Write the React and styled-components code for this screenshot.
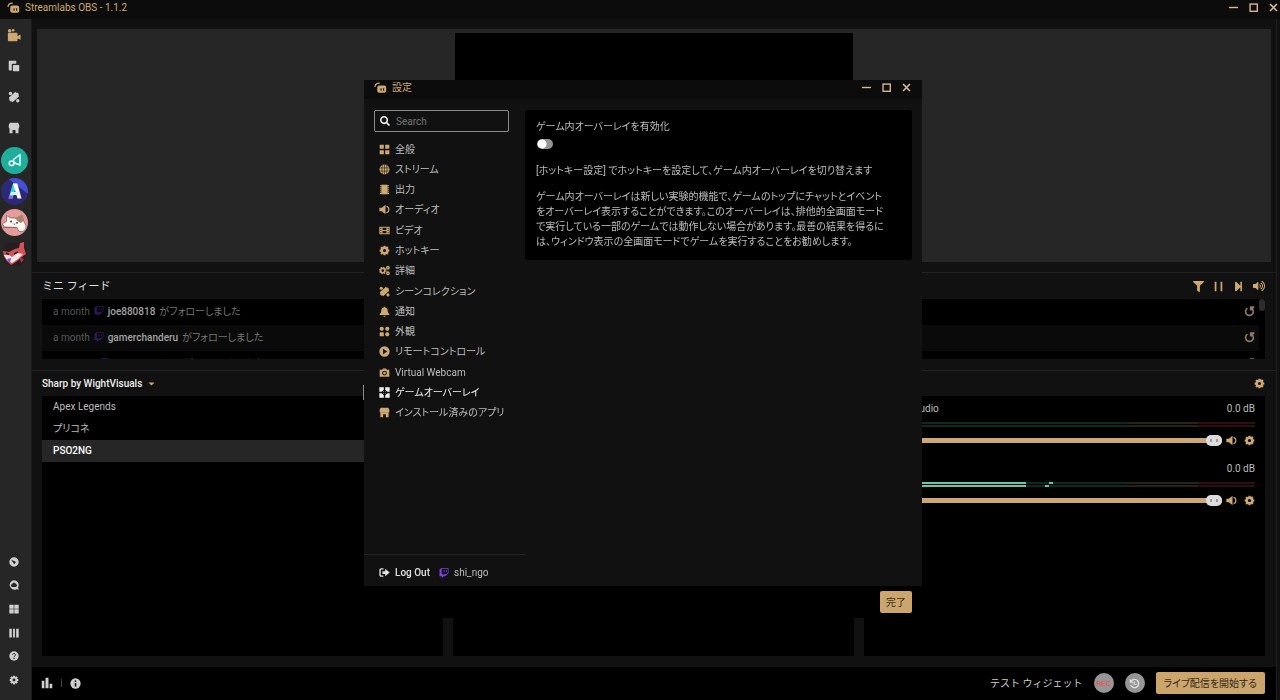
import { useState } from "react";
import styled, { createGlobalStyle } from "styled-components";
import { FaTwitch, FaSearch, FaFilter, FaStepForward, FaVolumeUp, FaCaretDown } from "react-icons/fa";

const GlobalStyle = createGlobalStyle`
  * {
    box-sizing: border-box;
  }

  body {
    margin: 0;
    background-color: #111111;
    color: #bdbdbd;
    font-family: Roboto, "Noto Sans CJK JP", sans-serif;
    font-size: 10px;
    line-height: 15px;
    font-feature-settings: "palt";
  }

  button,
  input {
    font: inherit;
    font-feature-settings: inherit;
    color: inherit;
  }

  button {
    border: 0;
    padding: 0;
    background: none;
  }

  ul {
    list-style: none;
    margin: 0;
    padding: 0;
  }

  h2,
  p {
    margin: 0;
  }

  svg {
    display: block;
    flex-shrink: 0;
  }
`;

const gold = "#cda872";

/* ---------- icons ---------- */

const Svg = ({ size = 11, children, ...rest }) => (
  <svg width={size} height={size} viewBox="0 0 16 16" fill="currentColor" aria-hidden="true" {...rest}>
    {children}
  </svg>
);

const LogoIcon = (props) => (
  <Svg {...props}>
    <path
      fillRule="evenodd"
      d="M6.500 5.500h6a2.500 2.500 0 0 1 2.500 2.500v4a2.500 2.500 0 0 1-2.500 2.500h-6A2.500 2.500 0 0 1 4 12V8a2.500 2.500 0 0 1 2.500-2.500zM8 9v3h1.300V9zm3.200 0v3h1.300V9z"
    />
    <path d="M1.300 6.500C1.800 4 3.800 2.500 6.500 2.500" fill="none" stroke="currentColor" strokeWidth="1.600" strokeLinecap="round" />
  </Svg>
);

const EditorIcon = (props) => (
  <Svg {...props}>
    <circle cx="3" cy="3" r="2" />
    <circle cx="7" cy="2.500" r="1.500" />
    <path d="M1 5.500h10a1 1 0 0 1 1 1V9l3.500-1.500v6L12 12v2a1 1 0 0 1-1 1H2a1 1 0 0 1-1-1z" />
  </Svg>
);

const ThemesIcon = (props) => (
  <Svg {...props}>
    <path d="M1 1h10v4H6.500A1.500 1.500 0 0 0 5 6.500V14H2a1 1 0 0 1-1-1z" />
    <rect x="6.500" y="6.500" width="8.500" height="8.500" rx="1" />
  </Svg>
);

const ToolsIcon = (props) => (
  <Svg {...props}>
    <path d="M10 1l1.500 1.500 1-.5 2 2-.5 1.500L15 7l-9 8-1.500-1.500-1 .5-2-2 .5-1.500L1 9z" />
    <circle cx="3.300" cy="3.300" r="2.300" />
    <circle cx="13" cy="13" r="2.300" />
  </Svg>
);

const StoreIcon = (props) => (
  <Svg {...props}>
    <path d="M2.500 1h11l1.500 3v3a1.500 1.500 0 0 1-1.500 1.500h-11A1.500 1.500 0 0 1 1 7V4z" />
    <path fillRule="evenodd" d="M2 8h12v7H2zM6 10.500V15h4v-4.500z" />
  </Svg>
);

const DashboardIcon = (props) => (
  <Svg {...props}>
    <path fillRule="evenodd" d="M8 .5a7.500 7.500 0 1 1 0 15 7.500 7.500 0 0 1 0-15zM3.500 4.500l3.200 4.800a2 2 0 1 0 2.600-2.600z" />
  </Svg>
);

const CloudbotIcon = (props) => (
  <Svg {...props}>
    <path
      fillRule="evenodd"
      d="M8 .5a7.500 7.500 0 0 1 6.500 11.200L15.500 15l-3.500-.3A7.500 7.500 0 1 1 8 .5zM8 4a3 3 0 0 0-2.800 2.500A2.200 2.200 0 0 0 5.500 11h5a2.200 2.200 0 0 0 .3-4.500A3 3 0 0 0 8 4z"
    />
  </Svg>
);

const GridIcon = (props) => (
  <Svg {...props}>
    <path d="M.5 1h7v6.500h-7zM8.500 1h7v6.500h-7zM.5 8.500h7V15h-7zM8.500 8.500h7V15h-7z" />
  </Svg>
);

const ColumnsIcon = (props) => (
  <Svg {...props}>
    <path d="M.5 1h4v14h-4zM6.500 1h3v14h-3zM11.500 1h4v14h-4z" />
  </Svg>
);

const QuestionIcon = (props) => (
  <Svg {...props}>
    <circle cx="8" cy="8" r="7.500" />
    <path d="M5.700 6.200a2.300 2.300 0 1 1 3.500 2C8.300 8.700 8 9 8 10" fill="none" stroke="#262626" strokeWidth="1.600" />
    <circle cx="8" cy="12" r="1.100" fill="#262626" />
  </Svg>
);

const InfoIcon = (props) => (
  <Svg {...props}>
    <circle cx="8" cy="8" r="7.500" />
    <circle cx="8" cy="4.500" r="1.300" fill="#000000" />
    <path d="M8 7v5.500" stroke="#000000" strokeWidth="2.200" />
  </Svg>
);

const GearIcon = (props) => (
  <Svg {...props}>
    <path
      fillRule="evenodd"
      d="M6.600 1h2.800l.5 2 1.900-1.100 2.100 2.100L12.900 6l2.100.6v2.800l-2.100.5 1.100 1.900-2.200 2.200-1.900-1.100-.5 2.100H6.600L6 12.900 4.100 14 2 11.900l1.100-1.900L1 9.400V6.600L3.100 6 2 4.100 4.100 2 6 3.100zM8 5.700a2.300 2.300 0 1 0 0 4.600 2.300 2.300 0 0 0 0-4.600z"
    />
  </Svg>
);

const StatsIcon = (props) => (
  <Svg {...props}>
    <path d="M1 5h3.500v10H1zM6 1h4v14H6zM11.500 9H15v6h-3.500z" />
  </Svg>
);

const TilesIcon = (props) => (
  <Svg {...props}>
    <path d="M1 1h6v6H1zM9 1h6v6H9zM1 9h6v6H1zM9 9h6v6H9z" />
  </Svg>
);

const GlobeIcon = (props) => (
  <Svg {...props}>
    <circle cx="8" cy="8" r="7.300" />
    <path
      d="M.5 5.700h15M.5 10.300h15M8 .5v15M5.300 1.200c-1.300 4-1.300 9.600 0 13.600M10.700 1.200c1.300 4 1.300 9.600 0 13.600"
      fill="none"
      stroke="#111111"
      strokeWidth=".8"
    />
  </Svg>
);

const OutputIcon = (props) => (
  <Svg {...props}>
    <path d="M3.500 1h9v14h-9z" />
    <path d="M1.500 2.500H4M1.500 5.500H4M1.500 8.500H4M1.500 11.500H4M1.500 13.800H4M12 2.500h2.500M12 5.500h2.500M12 8.500h2.500M12 11.500h2.500M12 13.800h2.500" stroke="currentColor" strokeWidth="1.400" />
  </Svg>
);

const SpeakerIcon = (props) => (
  <Svg {...props}>
    <path d="M.5 5.500h3.700L9.500 1v14l-5.300-4.500H.5z" />
    <path d="M11 3.500c4.500 1 4.500 8 0 9" fill="none" stroke="currentColor" strokeWidth="1.700" />
  </Svg>
);

const FilmIcon = (props) => (
  <Svg {...props}>
    <path fillRule="evenodd" d="M.5 2.500h15v11H.5zM2 4v1.500h1.500V4zm0 3.200v1.500h1.500V7.200zm0 3.300V12h1.500v-1.500zM12.500 4v1.500H14V4zm0 3.200v1.500H14V7.200zm0 3.300V12H14v-1.500zM5.200 4v3.200h5.600V4zm0 4.800V12h5.600V8.800z" />
  </Svg>
);

const GearsIcon = (props) => (
  <Svg {...props}>
    <circle cx="5.500" cy="8" r="3.200" fill="none" stroke="currentColor" strokeWidth="2.400" />
    <circle cx="5.500" cy="8" r="4.800" fill="none" stroke="currentColor" strokeWidth="1.500" strokeDasharray="2 1.770" />
    <circle cx="13" cy="4" r="1.800" fill="none" stroke="currentColor" strokeWidth="2" />
    <circle cx="13" cy="12" r="1.800" fill="none" stroke="currentColor" strokeWidth="2" />
  </Svg>
);

const BellIcon = (props) => (
  <Svg {...props}>
    <path d="M7 1h2v1.200c2.600.5 3.700 2.300 3.700 4.800 0 2.200.6 3.300 2.300 4.500V13H1v-1.500C2.700 10.300 3.300 9.200 3.300 7c0-2.500 1.100-4.300 3.700-4.800zM6 14h4a2 1.500 0 0 1-4 0z" />
  </Svg>
);

const AppearanceIcon = (props) => (
  <Svg {...props}>
    <rect x="1" y="1" width="6" height="6" rx="2.500" />
    <rect x="9" y="1" width="6" height="6" rx="2.500" />
    <rect x="1" y="9" width="6" height="6" rx="1" />
    <rect x="9" y="9" width="6" height="6" rx="2.500" />
  </Svg>
);

const PlayIcon = (props) => (
  <Svg {...props}>
    <path fillRule="evenodd" d="M8 .5a7.500 7.500 0 1 1 0 15 7.500 7.500 0 0 1 0-15zM5.800 4v8l6.200-4z" />
  </Svg>
);

const WebcamIcon = (props) => (
  <Svg {...props}>
    <path fillRule="evenodd" d="M1 4h3.500L6 2h4l1.500 2H15v10H1zM8 5.300a3.500 3.500 0 1 0 0 7 3.500 3.500 0 0 0 0-7z" />
    <circle cx="8" cy="8.800" r="2" />
  </Svg>
);

const OverlayIcon = (props) => (
  <Svg {...props}>
    <path d="M.5.500H7v3L5.500 5 7 6.500V7h-.5L5 5.500 3.500 7h-3zM15.500.5V7h-3L11 5.500 9.500 7H9v-.5L10.500 5 9 3.500v-3zM.5 15.500V9h3L5 10.500 6.500 9H7v.5L5.500 11 7 12.500v3zM15.500 15.500H9v-3l1.500-1.500L9 9.500V9h.5l1.500 1.500L12.500 9h3z" />
  </Svg>
);

const LogOutIcon = (props) => (
  <Svg {...props}>
    <path d="M6.500 2.800H3.200A1.700 1.700 0 0 0 1.500 4.500v7a1.700 1.700 0 0 0 1.700 1.700h3.300" fill="none" stroke="currentColor" strokeWidth="2" />
    <path d="M5 6h4V2.500L15.500 8 9 13.500V10H5z" />
  </Svg>
);

const PauseIcon = (props) => (
  <Svg {...props}>
    <path d="M2.500 1h2.500v14H2.500zM11 1h2.500v14H11z" />
  </Svg>
);

const ReplayIcon = (props) => (
  <Svg {...props}>
    <path d="M5 3.300A5.600 5.600 0 1 0 11.500 3.800" fill="none" stroke="currentColor" strokeWidth="2.400" />
    <path d="M8.500.5H15v1.500L11 7 8.500 6z" />
  </Svg>
);

const HistoryIcon = (props) => (
  <Svg {...props}>
    <path d="M3.200 4.500a6 6 0 1 1-.8 5.500" fill="none" stroke="currentColor" strokeWidth="2" />
    <path d="M1 1v6h6z" />
    <path d="M7.500 5v4h3.500" fill="none" stroke="currentColor" strokeWidth="1.500" />
  </Svg>
);

const MinimizeIcon = (props) => (
  <Svg {...props}>
    <path d="M1.500 8h13" stroke="currentColor" strokeWidth="2" />
  </Svg>
);

const MaximizeIcon = (props) => (
  <Svg {...props}>
    <rect x="3" y="3" width="10.500" height="10.500" fill="none" stroke="currentColor" strokeWidth="2" />
  </Svg>
);

const CloseIcon = (props) => (
  <Svg {...props}>
    <path d="M3 3l10 10M13 3L3 13" stroke="currentColor" strokeWidth="2.300" />
  </Svg>
);

const NoteApp = () => (
  <svg width="27" height="27" viewBox="0 0 27 27" aria-hidden="true">
    <circle cx="13.500" cy="13.500" r="13.500" fill="#1fae9b" />
    <path
      d="M12.500 12.500l6.500-5v10.500l-4-1.500c-1.500-.8-2.500-2.500-4.500-2.500a2.300 2.300 0 1 0 0 4.600c1.500 0 2.500-1.200 2.500-2.600z"
      fill="none"
      stroke="#e8fffb"
      strokeWidth="1.500"
      strokeLinejoin="round"
    />
  </svg>
);

const LetterApp = () => (
  <svg width="27" height="27" viewBox="0 0 27 27" aria-hidden="true">
    <circle cx="13.500" cy="13.500" r="13.500" fill="#2c2a78" />
    <path d="M8 1.200A13.500 13.500 0 0 1 27 13.500c0 .8 0 1.500-.2 2.200z" fill="#4450d8" />
    <path d="M12 5.500h4l-4.500 15H7.500z" fill="#3fd3e6" />
    <path d="M12 5.500h4.300l4.200 15h-4z" fill="#ffffff" />
    <path d="M10 14h7l.8 3H9.200z" fill="#d4f5ff" />
    <path d="M7.500 20.500l1-3 3.300 1-.5 2z" fill="#c34fd8" />
  </svg>
);

const CatApp = () => (
  <svg width="27" height="27" viewBox="0 0 27 27" aria-hidden="true">
    <circle cx="13.500" cy="13.500" r="13.500" fill="#e59a9c" />
    <path d="M1.500 15c1-1.500 3-1 4-3V6.500L10 9h6l5-3 1.500 5.500c1 3 2.500 4 2.500 6.500 0 3-3 5-6 4.500-2 0-2-3-3-4L3.500 18z" fill="#fbf6f1" stroke="#6d5550" strokeWidth=".7" />
    <path d="M14 9h2l5-3 1.500 6-3 2-3-2z" fill="#a8846b" />
    <circle cx="10" cy="12.500" r=".9" fill="#3a2c2a" />
    <circle cx="16" cy="13.800" r=".9" fill="#3a2c2a" />
    <path d="M12 14.500l1 1 1.300-.7" fill="none" stroke="#6d5550" strokeWidth=".8" />
    <path d="M2 18.500h14" stroke="#8f5c5d" strokeWidth=".8" />
  </svg>
);

const FoxApp = () => (
  <svg width="27" height="27" viewBox="0 0 27 27" aria-hidden="true">
    <path d="M3 6l4-4 3 1 6-1 5-1 3 6 2 7-2 8-6 4-9-1-6-5-1-7z" fill="#281e22" />
    <path d="M2 11l6 1 6-3 4-1 1-5 4-1v6l2 6-4 3-6 5-5 3-4-4-3-4z" fill="#d2545a" />
    <path d="M3 15l5 0 3 2 5-4 6 1-5 5-6 4-5-3z" fill="#f2e6e8" />
    <path d="M5 13l3 1.500M13 14l4-2" stroke="#2a1a1e" strokeWidth="1.500" />
    <path d="M6 19l4-1-1 5z" fill="#8755c9" />
    <path d="M19 18l4 1-3 4z" fill="#b23b45" />
  </svg>
);

/* ---------- main window ---------- */

const Window = styled.div`
  display: flex;
  flex-direction: column;
  min-height: 100vh;
`;

const TitleBar = styled.header`
  display: flex;
  align-items: center;
  gap: 5px;
  height: 19px;
  padding: 0 ${(props) => props.$end}px 4px ${(props) => props.$start}px;
  background-color: #0c0c0c;
  color: ${gold};
`;

const WindowButtons = styled.div`
  display: flex;
  gap: 9px;
  margin-left: auto;

  button {
    color: #d6bb94;
  }
`;

const Body = styled.div`
  display: flex;
  flex: 1;
`;

const SideNav = styled.nav`
  display: flex;
  flex-direction: column;
  width: 32px;
  padding: 0 3px 8px 0;
  background-color: #262626;
  border-right: 1px solid #1a1a1a;
`;

const SideButton = styled.button`
  display: grid;
  place-items: center;
  height: 31px;
  color: ${(props) => (props.$active ? gold : "#cfcfcf")};
`;

const SideApps = styled.div`
  display: grid;
  margin-top: 2px;
`;

const SideBottom = styled.div`
  display: grid;
  grid-auto-rows: 1fr;
  height: 142px;
  margin-top: auto;

  button {
    height: auto;
  }
`;

const Main = styled.main`
  display: flex;
  flex-direction: column;
  flex: 1;
  min-width: 0;
  margin-right: 3px;
  border-right: 1px solid #1e1e1e;
`;

const Preview = styled.section`
  display: flex;
  justify-content: center;
  height: 233px;
  margin: 10px 5px;
  padding: 4px 4px 5px;
  background-color: #262626;
`;

const Canvas = styled.div`
  height: 100%;
  aspect-ratio: 16 / 9;
  background-color: #000000;
`;

const Section = styled.section`
  padding: 0 11px 11px 10px;
  border-top: 1px solid #222222;
`;

const SectionHead = styled.div`
  display: flex;
  align-items: center;
  justify-content: space-between;
  height: ${(props) => props.$height}px;
`;

const FeedTitle = styled.h2`
  font-size: 11px;
  font-weight: 400;
  font-feature-settings: normal;
  color: #e0e0e0;
`;

const IconRow = styled.div`
  display: flex;
  gap: 9px;
  color: ${gold};
`;

const Feed = styled.div`
  display: flex;
  height: 60px;
  overflow: hidden;
  background-color: #000000;
`;

const FeedList = styled.ul`
  flex: 1;
`;

const FeedScrollbar = styled.div`
  width: 6px;
  height: 12px;
  border-radius: 3px;
  background-color: #2c2c2c;
`;

const FeedItem = styled.li`
  display: flex;
  align-items: center;
  gap: 4px;
  height: 26px;
  padding: 0 4px 2px 11px;
  color: #757575;

  &:nth-child(even) {
    background-color: #0a0a0a;
  }

  b {
    font-weight: 500;
    color: #a3a3a3;
  }

  button {
    margin-left: auto;
    color: #8c7863;
  }
`;

const When = styled.span`
  color: #575757;
`;

const TwitchMark = styled(FaTwitch)`
  color: ${(props) => props.color};
`;

const Panels = styled.div`
  display: grid;
  grid-template-columns: repeat(3, 1fr);
  gap: 10px;
  flex: 1;
  padding: 0 11px 11px 10px;
  border-top: 1px solid #222222;
`;

const Panel = styled.section`
  display: flex;
  flex-direction: column;
`;

const PanelBox = styled.div`
  flex: 1;
  background-color: #000000;
`;

const CollectionButton = styled.button`
  display: flex;
  align-items: center;
  gap: 5px;
  font-weight: 500;
  color: #f0f0f0;

  svg {
    color: ${gold};
  }
`;

const SceneItem = styled.li`
  height: 22px;
  padding: 3px 11px;
  color: ${(props) => (props.$active ? "#ffffff" : "#bdbdbd")};
  font-weight: ${(props) => (props.$active ? 500 : 400)};
  background-color: ${(props) => (props.$active ? "#262626" : "transparent")};
`;

const MixerItem = styled.div`
  display: grid;
  height: 60px;
  padding: 5px 10px 0;
  align-content: start;
`;

const MixerLabel = styled.div`
  display: flex;
  justify-content: space-between;
`;

const Meter = styled.div`
  display: grid;
  gap: 1px;
  margin: 6px 0 8px;
`;

const MeterBar = styled.div`
  height: 2px;
  background: linear-gradient(to right, #0a2a22 67%, #2a2312 67% 85%, #300d11 85%);
`;

const MeterLevel = styled.div`
  height: 2px;
`;

const MixerControls = styled.div`
  display: flex;
  align-items: center;
  gap: 7px;
  height: 11px;
  color: ${gold};
`;

const Volume = styled.input`
  appearance: none;
  flex: 1;
  min-width: 0;
  height: 5px;
  margin: 0 -3px 0 0;
  border-radius: 2px;
  background-color: ${gold};

  &::-webkit-slider-thumb {
    appearance: none;
    width: 16px;
    height: 11px;
    border-radius: 5px;
    background:
      linear-gradient(#999999, #999999) 4px 4px / 2px 3px no-repeat,
      linear-gradient(#999999, #999999) 10px 4px / 2px 3px no-repeat,
      #dcdcdc;
  }
`;

const Footer = styled.footer`
  display: flex;
  align-items: center;
  gap: 8px;
  height: 33px;
  padding: 0 11px 1px 9px;
  background-color: #000000;
  color: #cfcfcf;
`;

const Divider = styled.span`
  width: 1px;
  height: 8px;
  background-color: #444444;
`;

const FooterActions = styled.div`
  display: flex;
  align-items: center;
  gap: 11px;
  margin-left: auto;
`;

const WidgetButton = styled.button`
  font-feature-settings: normal;
`;

const RoundButton = styled.button`
  display: grid;
  place-items: center;
  width: 20px;
  height: 20px;
  border-radius: 50%;
  background-color: #969696;
  color: ${(props) => props.color};
  font-size: 8px;
`;

const GoldButton = styled.button`
  height: 22px;
  padding: 0 ${(props) => props.$pad}px;
  border-radius: 2px;
  background-color: #cba56b;
  color: #33291b;
`;

/* ---------- settings window ---------- */

const Dialog = styled.div`
  position: fixed;
  top: 80px;
  left: 364px;
  display: flex;
  flex-direction: column;
  width: 558px;
  height: 538px;
  background-color: #111111;
`;

const DialogBody = styled.div`
  display: flex;
  flex: 1;
`;

const DialogNav = styled.nav`
  display: flex;
  flex-direction: column;
  width: 161px;
  padding-top: 11px;
`;

const SearchBox = styled.label`
  display: flex;
  align-items: center;
  gap: 6px;
  height: 22px;
  margin: 0 16px 7px 10px;
  padding: 0 5px;
  border: 1px solid #8a8a8a;
  border-radius: 2px;
  color: #f0f0f0;

  input {
    width: 100%;
    padding: 0;
    border: 0;
    outline: 0;
    background: none;
  }

  input::placeholder {
    color: #757575;
  }
`;

const NavList = styled.ul`
  display: grid;
  grid-auto-rows: 1fr;
  height: 284px;
`;

const NavItem = styled.li`
  display: flex;
  align-items: center;

  button {
    display: flex;
    align-items: center;
    gap: 5px;
    flex: 1;
    padding-left: 15px;
    box-shadow: ${(props) => (props.$active ? "-1px 0 0 #8a8a8a" : "none")};
    color: ${(props) => (props.$active ? "#f2f2f2" : "#bdbdbd")};
  }

  svg {
    color: ${(props) => (props.$active ? "#f2f2f2" : gold)};
  }
`;

const Account = styled.div`
  display: flex;
  align-items: center;
  gap: 9px;
  height: 32px;
  margin-top: auto;
  padding: 4px 15px 0;
  border-top: 1px solid #242424;

  button,
  span {
    display: flex;
    align-items: center;
    gap: 5px;
  }

  button {
    font-weight: 500;
    color: #e0e0e0;
  }
`;

const Card = styled.section`
  flex: 1;
  align-self: flex-start;
  margin: 11px 10px 0 0;
  padding: 9px 11px 11px;
  border-radius: 3px;
  background-color: #000000;

  p {
    margin-top: 11px;
    white-space: nowrap;
  }
`;

const ToggleLabel = styled.label`
  display: grid;
  gap: 5px;
  margin-bottom: 14px;
`;

const Toggle = styled.input`
  appearance: none;
  width: 16px;
  height: 10px;
  margin: 0 0 0 1px;
  border-radius: 5px;
  background: radial-gradient(circle at 5px 5px, #ffffff 4px, transparent 5px) #949494;

  &:checked {
    background: radial-gradient(circle at 11px 5px, #ffffff 4px, transparent 5px) ${gold};
  }
`;

const DialogFooter = styled.div`
  display: flex;
  align-items: center;
  justify-content: flex-end;
  height: 32px;
  padding-right: 10px;
  background-color: #000000;
`;

const sideItems = [
  { label: "エディター", Icon: EditorIcon, active: true },
  { label: "テーマ", Icon: ThemesIcon },
  { label: "ツール", Icon: ToolsIcon },
  { label: "ストア", Icon: StoreIcon },
];

const sideApps = [NoteApp, LetterApp, CatApp, FoxApp];

const sideBottom = [DashboardIcon, CloudbotIcon, GridIcon, ColumnsIcon, QuestionIcon, GearIcon];

const feed = [
  { when: "a month", name: "joe880818" },
  { when: "a month", name: "gamerchanderu" },
  { when: "2 months", name: "kazenoamours" },
];

const scenes = ["Apex Legends", "プリコネ", "PSO2NG"];

const channels = [
  { name: "Desktop Audio", levels: [0, 0] },
  { name: "Mic/Aux", levels: [40, 40], peaks: [46, 45] },
];

const settings = [
  { name: "全般", Icon: TilesIcon },
  { name: "ストリーム", Icon: GlobeIcon },
  { name: "出力", Icon: OutputIcon },
  { name: "オーディオ", Icon: SpeakerIcon },
  { name: "ビデオ", Icon: FilmIcon },
  { name: "ホットキー", Icon: GearIcon },
  { name: "詳細", Icon: GearsIcon },
  { name: "シーンコレクション", Icon: ToolsIcon },
  { name: "通知", Icon: BellIcon },
  { name: "外観", Icon: AppearanceIcon },
  { name: "リモートコントロール", Icon: PlayIcon },
  { name: "Virtual Webcam", Icon: WebcamIcon },
  { name: "ゲームオーバーレイ", Icon: OverlayIcon },
  { name: "インストール済みのアプリ", Icon: StoreIcon },
];

const Controls = () => (
  <WindowButtons>
    <button aria-label="最小化"><MinimizeIcon /></button>
    <button aria-label="最大化"><MaximizeIcon /></button>
    <button aria-label="閉じる"><CloseIcon /></button>
  </WindowButtons>
);

const Channel = ({ name, levels, peaks }) => (
  <MixerItem>
    <MixerLabel>
      <span>{name}</span>
      <span>0.0 dB</span>
    </MixerLabel>
    <Meter>
      {levels.map((level, i) => (
        <MeterBar key={i}>
          <MeterLevel
            style={{
              background: peaks
                ? `linear-gradient(to right, #62c9aa ${level}%, transparent ${level}% ${peaks[i]}%, #62c9aa ${peaks[i]}% ${peaks[i] + 1}%, transparent ${peaks[i] + 1}%)`
                : "none",
            }}
          />
        </MeterBar>
      ))}
    </Meter>
    <MixerControls>
      <Volume type="range" aria-label={name} defaultValue="100" />
      <button aria-label="ミュート"><SpeakerIcon /></button>
      <button aria-label="設定"><GearIcon /></button>
    </MixerControls>
  </MixerItem>
);

const SettingsDialog = () => {
  const [current, setCurrent] = useState("ゲームオーバーレイ");

  return (
    <Dialog role="dialog" aria-label="設定">
      <TitleBar $start={10} $end={10}>
        <LogoIcon size={13} />
        設定
        <Controls />
      </TitleBar>
      <DialogBody>
        <DialogNav>
          <SearchBox>
            <FaSearch size={10} />
            <input type="text" placeholder="Search" aria-label="Search" />
          </SearchBox>
          <NavList>
            {settings.map(({ name, Icon }) => (
              <NavItem key={name} $active={name === current}>
                <button onClick={() => setCurrent(name)}>
                  <Icon />
                  {name}
                </button>
              </NavItem>
            ))}
          </NavList>
          <Account>
            <button><LogOutIcon />Log Out</button>
            <span><TwitchMark size={10} color="#7b3fe4" />shi_ngo</span>
          </Account>
        </DialogNav>
        <Card>
          <ToggleLabel>
            ゲーム内オーバーレイを有効化
            <Toggle type="checkbox" />
          </ToggleLabel>
          <p>[ホットキー設定] でホットキーを設定して、ゲーム内オーバーレイを切り替えます</p>
          <p>
            ゲーム内オーバーレイは新しい実験的機能で、ゲームのトップにチャットとイベント
            <br />
            をオーバーレイ表示することができます。このオーバーレイは、排他的全画面モード
            <br />
            で実行している一部のゲームでは動作しない場合があります。最善の結果を得るに
            <br />
            は、ウィンドウ表示の全画面モードでゲームを実行することをお勧めします。
          </p>
        </Card>
      </DialogBody>
      <DialogFooter>
        <GoldButton $pad={6}>完了</GoldButton>
      </DialogFooter>
    </Dialog>
  );
};

const App = () => {
  return (
    <>
      <GlobalStyle />
      <Window>
        <TitleBar $start={7} $end={1}>
          <LogoIcon size={13} />
          Streamlabs OBS - 1.1.2
          <Controls />
        </TitleBar>
        <Body>
          <SideNav>
            {sideItems.map(({ label, Icon, active }) => (
              <SideButton key={label} aria-label={label} $active={active}>
                <Icon size={active ? 14 : 12} />
              </SideButton>
            ))}
            <SideApps>
              {sideApps.map((Icon, i) => (
                <SideButton key={i} aria-label={`アプリ ${i + 1}`}><Icon /></SideButton>
              ))}
            </SideApps>
            <SideBottom>
              {sideBottom.map((Icon, i) => (
                <SideButton key={i} aria-label={`メニュー ${i + 1}`}><Icon size={10} /></SideButton>
              ))}
            </SideBottom>
          </SideNav>
          <Main>
            <Preview>
              <Canvas />
            </Preview>
            <Section>
              <SectionHead $height={26}>
                <FeedTitle>ミニ フィード</FeedTitle>
                <IconRow>
                  <button aria-label="フィルター"><FaFilter size={11} /></button>
                  <button aria-label="一時停止"><PauseIcon /></button>
                  <button aria-label="スキップ"><FaStepForward size={11} /></button>
                  <button aria-label="音量"><FaVolumeUp size={12} /></button>
                </IconRow>
              </SectionHead>
              <Feed>
                <FeedList>
                  {feed.map(({ when, name }) => (
                    <FeedItem key={name}>
                      <When>{when}</When>
                      <TwitchMark size={10} color="#2f1a58" />
                      <b>{name}</b>
                      がフォローしました
                      <button aria-label="再生"><ReplayIcon /></button>
                    </FeedItem>
                  ))}
                </FeedList>
                <FeedScrollbar />
              </Feed>
            </Section>
            <Panels>
              <Panel>
                <SectionHead $height={25}>
                  <CollectionButton>
                    Sharp by WightVisuals
                    <FaCaretDown size={9} />
                  </CollectionButton>
                </SectionHead>
                <PanelBox>
                  <ul>
                    {scenes.map((name) => (
                      <SceneItem key={name} $active={name === "PSO2NG"}>{name}</SceneItem>
                    ))}
                  </ul>
                </PanelBox>
              </Panel>
              <Panel>
                <SectionHead $height={25} />
                <PanelBox />
              </Panel>
              <Panel>
                <SectionHead $height={25}>
                  <span />
                  <IconRow>
                    <button aria-label="ミキサー設定"><GearIcon /></button>
                  </IconRow>
                </SectionHead>
                <PanelBox>
                  {channels.map((channel) => (
                    <Channel key={channel.name} {...channel} />
                  ))}
                </PanelBox>
              </Panel>
            </Panels>
            <Footer>
              <StatsIcon size={12} />
              <Divider />
              <InfoIcon />
              <FooterActions>
                <WidgetButton>テスト ウィジェット</WidgetButton>
                <RoundButton color="#f5483f">REC</RoundButton>
                <RoundButton color="#e0e0e0" aria-label="リプレイ"><HistoryIcon size={11} /></RoundButton>
                <GoldButton $pad={8}>ライブ配信を開始する</GoldButton>
              </FooterActions>
            </Footer>
          </Main>
        </Body>
      </Window>
      <SettingsDialog />
    </>
  );
};

export default App;
